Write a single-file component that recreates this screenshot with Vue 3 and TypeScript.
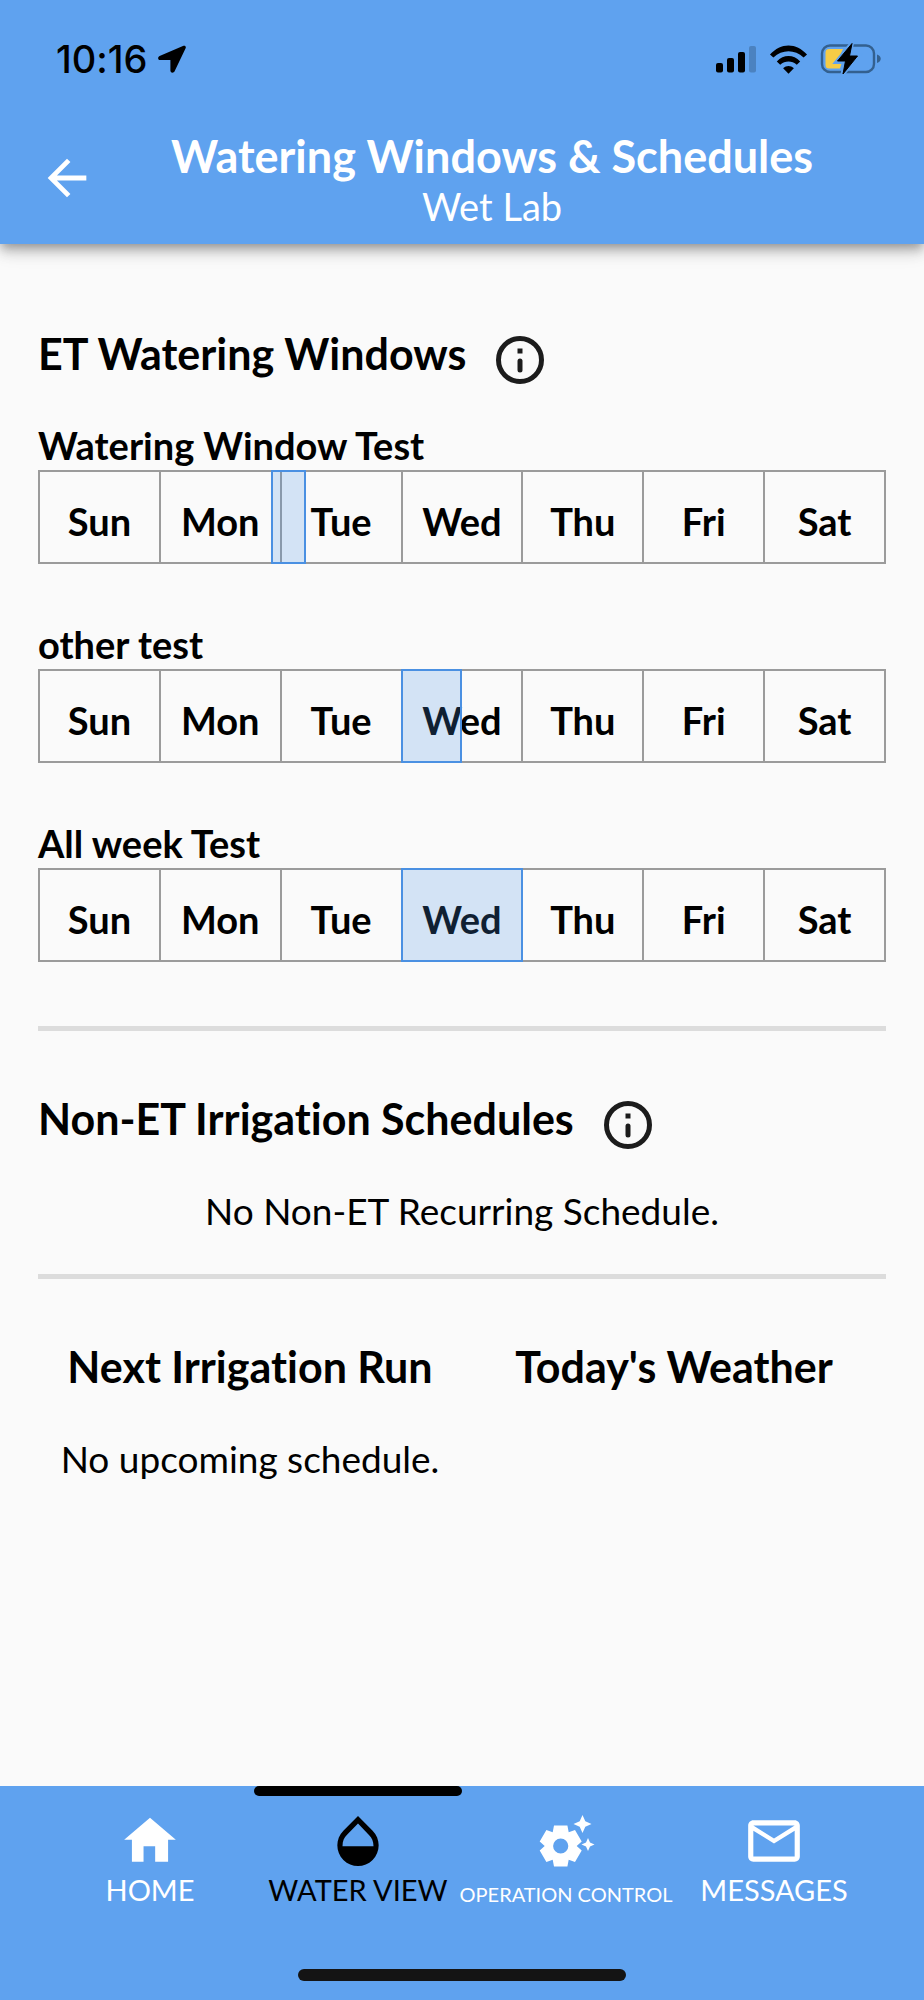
<script setup lang="ts">
interface WateringWindow {
  name: string
  /** Start and length, in days counted from Sunday 00:00. */
  start: number
  length: number
}

const days: string[] = ['Sun', 'Mon', 'Tue', 'Wed', 'Thu', 'Fri', 'Sat']

const windows: WateringWindow[] = [
  { name: 'Watering Window Test', start: 1.92, length: 0.29 },
  { name: 'other test', start: 3, length: 0.5 },
  { name: 'All week Test', start: 3, length: 1 },
]

const percent = (value: number): string => `${(value / days.length) * 100}%`
</script>

<template>
  <div class="screen">
    <header class="top">
      <div class="status">
        <div class="clock">
          <span>10:16</span>
          <svg class="location" viewBox="0 0 28 28" aria-hidden="true">
            <path d="M25.5 .8 1.6 11C-.5 12-.3 14.800 2 15H12.400V25.400C12.600 28 15.400 28.400 16.600 26.200L27.600 3.200C28.400 1.400 27 .2 25.500 .8Z" />
          </svg>
        </div>
        <div class="indicators">
          <svg class="signal" viewBox="0 0 42 28" aria-hidden="true">
            <rect x="1" y="18" width="7" height="9.500" rx="2" />
            <rect x="12" y="13" width="7" height="14.500" rx="2" />
            <rect x="23" y="7" width="7" height="20.500" rx="2" />
            <rect x="34" y="1" width="7" height="26.500" rx="2" fill="#4b82c0" />
          </svg>
          <svg class="wifi" viewBox="0 0 40 30" aria-hidden="true">
            <path d="M1 10.500C12 -2 28 -2 39 10.500L35.500 13.500C26.500 5 13.500 5 4.500 13.500Z" />
            <path d="M8 17.500C15 10 25 10 32 17.500L28.500 21C23.500 16.500 16.500 16.500 11.500 21Z" />
            <path d="M14.500 24.500C18 21.500 22 21.500 25.500 24.500L20 30Z" />
          </svg>
          <svg class="battery" viewBox="0 0 62 32" aria-hidden="true">
            <rect x="2" y="2.500" width="52" height="26.500" rx="8" fill="none" stroke="#33608f" stroke-width="2.400" />
            <path d="M57 11.500C62 13 62 18.500 57 20Z" fill="#33608f" />
            <path d="M9 6H23L17 19H22L20 25.500H9Q5.500 25.500 5.500 22V9.500Q5.500 6 9 6Z" fill="#f6cc45" />
            <path d="M32 0 16.500 19H25L22.500 31.500 38.500 12.500H29.500Z" stroke="#5fa2ef" stroke-width="4" />
            <path d="M32 .5 17.500 18H25.500L23 31 37.500 13H29.500Z" stroke="#000" stroke-linejoin="round" />
          </svg>
        </div>
      </div>
      <div class="bar">
        <button class="back" type="button" aria-label="Back">
          <svg viewBox="0 0 24 24" aria-hidden="true">
            <path d="M20 11H7.830l5.590-5.590L12 4l-8 8 8 8 1.410-1.410L7.830 13H20z" />
          </svg>
        </button>
        <div class="titles">
          <h1>Watering Windows &amp; Schedules</h1>
          <p>Wet Lab</p>
        </div>
      </div>
    </header>

    <main class="content">
      <section>
        <div class="heading">
          <h2>ET Watering Windows</h2>
          <button class="info" type="button" aria-label="About ET watering windows">
            <svg viewBox="0 0 48 48" aria-hidden="true">
              <circle cx="24" cy="24" r="21.500" />
              <path d="M24 12.500v5" />
              <path d="M24 25v9" stroke-linecap="round" />
            </svg>
          </button>
        </div>

        <div class="windows">
          <div v-for="item in windows" :key="item.name">
            <h3>{{ item.name }}</h3>
            <div class="week">
              <table :aria-label="item.name">
                <tbody>
                  <tr>
                    <td v-for="day in days" :key="day">{{ day }}</td>
                  </tr>
                </tbody>
              </table>
              <div class="span" :style="{ left: percent(item.start), width: percent(item.length) }"></div>
            </div>
          </div>
        </div>
      </section>

      <hr class="wide" />

      <section>
        <div class="heading">
          <h2>Non-ET Irrigation Schedules</h2>
          <button class="info" type="button" aria-label="About non-ET irrigation schedules">
            <svg viewBox="0 0 48 48" aria-hidden="true">
              <circle cx="24" cy="24" r="21.500" />
              <path d="M24 12.500v5" />
              <path d="M24 25v9" stroke-linecap="round" />
            </svg>
          </button>
        </div>
        <p class="note">No Non-ET Recurring Schedule.</p>
      </section>

      <hr />

      <section class="summary">
        <div>
          <h2>Next Irrigation Run</h2>
          <p class="note">No upcoming schedule.</p>
        </div>
        <div>
          <h2>Today's Weather</h2>
        </div>
      </section>
    </main>

    <footer class="bottom">
      <nav class="tabs" aria-label="Main">
        <a class="tab" href="#home">
          <svg viewBox="0 0 24 24" aria-hidden="true">
            <path d="M9.500 20v-6h4.500v6h5v-8.500h3L12 3 2 11.500h3V20z" />
          </svg>
          <span>HOME</span>
        </a>
        <a class="tab active" href="#water" aria-current="page">
          <svg viewBox="0 0 24 24" aria-hidden="true">
            <path d="M17.660 8 12 2.350 6.340 8C4.780 9.560 4 11.640 4 13.640s.78 4.110 2.340 5.670 3.610 2.350 5.660 2.350 4.100-.79 5.660-2.350S20 15.640 20 13.640 19.220 9.560 17.660 8zM6 14c.01-2 .62-3.270 1.760-4.400L12 5.270l4.240 4.380C17.380 10.770 17.990 12 18 14H6z" />
          </svg>
          <span>WATER VIEW</span>
        </a>
        <a class="tab" href="#operation">
          <svg viewBox="-4 -5 62 62" aria-hidden="true">
            <path
              fill-rule="evenodd"
              d="M15 10.600H28.400L29.700 17.200 36 15 42.700 26.600 37.700 31 42.700 35.400 36 47 29.700 44.800 28.400 51.400H15L13.700 44.800 7.400 47 .7 35.400 5.700 31 .7 26.600 7.400 15 13.700 17.200ZM21.700 23.400A7.600 7.600 0 1 0 21.700 38.600A7.600 7.600 0 1 0 21.700 23.400Z"
            />
            <path d="M43.500 0 46.300 6.200 52.500 9 46.300 11.800 43.500 18 40.700 11.800 34.500 9 40.700 6.200Z" />
            <path d="M49 23 51 27.500 55.500 29.500 51 31.500 49 36 47 31.500 42.500 29.500 47 27.500Z" />
          </svg>
          <span class="small">OPERATION CONTROL</span>
        </a>
        <a class="tab" href="#messages">
          <svg viewBox="0 0 24 24" aria-hidden="true">
            <path d="M20 4H4c-1.100 0-2 .9-2 2v12c0 1.100.9 2 2 2h16c1.100 0 2-.9 2-2V6c0-1.100-.9-2-2-2zm0 14H4V8l8 5 8-5v10zm-8-7L4 6h16l-8 5z" />
          </svg>
          <span>MESSAGES</span>
        </a>
      </nav>
      <div class="home-bar"></div>
    </footer>
  </div>
</template>

<style>
body {
  margin: 0;
  background: #fafafa;
}
</style>

<style scoped>
.screen {
  display: flex;
  flex-direction: column;
  min-height: 100vh;
  font-family: Lato, "Liberation Sans", sans-serif;
  font-variant-ligatures: none;
  color: #000;
}

h1,
h2,
h3,
p {
  margin: 0;
}

button {
  padding: 0;
  border: 0;
  background: none;
}

svg {
  display: block;
}

.top {
  background: #5fa2ef;
  box-shadow:
    0 5px 9px -2px rgba(0, 0, 0, 0.25),
    0 9px 12px rgba(0, 0, 0, 0.14),
    0 2px 24px rgba(0, 0, 0, 0.12);
}

.status {
  display: flex;
  justify-content: space-between;
  align-items: center;
  height: 118px;
  padding: 0 42px 0 56px;
}

.clock {
  display: flex;
  align-items: center;
  gap: 10px;
  font-family: Inter, "Liberation Sans", sans-serif;
  font-size: 38px;
  font-weight: 500;
}

.location {
  width: 28px;
  height: 28px;
}

.indicators {
  display: flex;
  align-items: center;
  gap: 12px;
}

.signal {
  width: 42px;
  height: 28px;
}

.wifi {
  width: 39px;
  height: 30px;
}

.battery {
  width: 62px;
  height: 32px;
}

.bar {
  display: flex;
  align-items: center;
  box-sizing: border-box;
  height: 126px;
  padding: 0 38px 6px;
}

.back svg {
  width: 58px;
  height: 58px;
  fill: #fff;
}

.titles {
  flex: 1;
  padding: 2px 0 0 2px;
  color: #fff;
  text-align: center;
}

.titles h1 {
  font-size: 45px;
  font-weight: 700;
  line-height: 54px;
}

.titles p {
  font-size: 38px;
  line-height: 46px;
}

.content {
  flex: 1;
  padding: 80px 38px 0;
}

.heading {
  display: flex;
  align-items: center;
  gap: 30px;
}

h2 {
  font-size: 43px;
  font-weight: 700;
  line-height: 60px;
}

.info {
  padding-top: 12px;
}

.info svg {
  width: 48px;
  height: 48px;
  fill: none;
  stroke: #1c1c1c;
  stroke-width: 5;
}

.windows {
  display: grid;
  gap: 57px;
  padding-top: 38px;
}

h3 {
  padding-bottom: 2px;
  font-size: 38px;
  font-weight: 700;
  line-height: 46px;
}

.week {
  position: relative;
}

table {
  width: 100%;
  border-collapse: collapse;
  table-layout: fixed;
}

td {
  height: 82px;
  padding: 8px 0 0;
  border: 2px solid #9b9b9b;
  font-size: 38px;
  font-weight: 700;
  line-height: 48px;
  text-align: center;
}

.span {
  position: absolute;
  top: 0;
  bottom: 0;
  box-sizing: border-box;
  border: 2px solid #4a90e2;
  background: rgba(74, 144, 226, 0.22);
}

hr {
  height: 5px;
  margin: 40px 0 58px;
  border: 0;
  background: #dcdcdc;
}

.wide {
  margin-top: 64px;
}

.note {
  padding-top: 39px;
  font-size: 37px;
  line-height: 46px;
  text-align: center;
}

.summary {
  display: grid;
  grid-template-columns: 1fr 1fr;
  text-align: center;
}

.bottom {
  background: #5fa2ef;
}

.tabs {
  display: grid;
  grid-template-columns: repeat(4, minmax(0, 1fr));
  padding: 0 46px;
}

.tab {
  position: relative;
  display: flex;
  flex-direction: column;
  align-items: center;
  padding-top: 24px;
  color: #fff;
  font-size: 29px;
  line-height: 36px;
  text-decoration: none;
}

.tab svg {
  width: 62px;
  height: 62px;
  fill: currentColor;
}

.active {
  color: #000;
}

.active::before {
  content: "";
  position: absolute;
  top: 0;
  left: 0;
  right: 0;
  height: 10px;
  border-radius: 5px;
  background: #000;
}

.small {
  font-size: 20px;
  line-height: 44px;
  white-space: nowrap;
}

.home-bar {
  width: 328px;
  height: 12px;
  margin: 53px auto 19px;
  border-radius: 6px;
  background: #141414;
}
</style>
